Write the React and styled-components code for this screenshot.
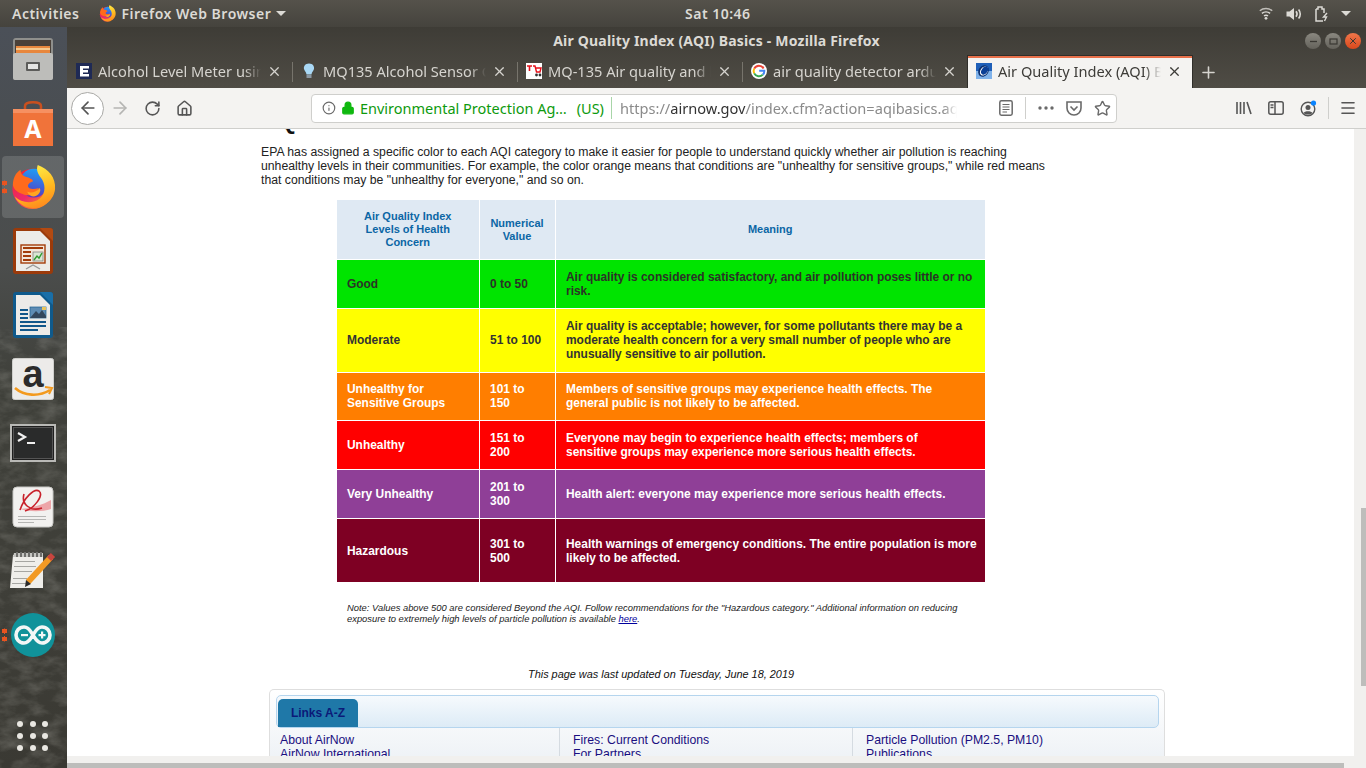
import React from 'react';
import styled, { createGlobalStyle } from 'styled-components';
import { ArrowLeft, ArrowRight, RotateCw, Home, Info, Lock, Star, Plus, X, Menu } from 'lucide-react';

const GlobalStyle = createGlobalStyle`
    html, body {
        margin: 0;
        padding: 0;
        width: 1366px;
        height: 768px;
        overflow: hidden;
        background: #fff;
    }
    * {
        box-sizing: border-box;
    }
`;

const UI_FONT = `"Noto Sans", "Open Sans", sans-serif`;
const WEB_FONT = `"Liberation Sans", Arial, sans-serif`;

const FirefoxLogo = ({ size, id }) => (
    <svg width={size} height={size} viewBox="0 0 48 48">
        <defs>
            <linearGradient id={`${id}a`} x1="0.1" y1="0.2" x2="0.7" y2="1">
                <stop offset="0" stopColor="#f0263f" />
                <stop offset="0.55" stopColor="#ec2a6c" />
                <stop offset="1" stopColor="#ff8a1e" />
            </linearGradient>
            <linearGradient id={`${id}b`} x1="0.5" y1="0" x2="0.3" y2="1">
                <stop offset="0" stopColor="#1f9cf5" />
                <stop offset="1" stopColor="#5a35c0" />
            </linearGradient>
            <linearGradient id={`${id}c`} x1="0.3" y1="0" x2="0.6" y2="1">
                <stop offset="0" stopColor="#fff04a" />
                <stop offset="0.6" stopColor="#ffb81f" />
                <stop offset="1" stopColor="#ff8a1e" />
            </linearGradient>
        </defs>
        <circle cx="23.5" cy="26" r="21" fill={`url(#${id}a)`} />
        <circle cx="25" cy="20" r="15" fill={`url(#${id}b)`} />
        <path d="M29 1 C40 5 48 14 47 26 C46 37 36 46 24 46 C15 46 8 41 5 34 C12 41 24 42 31 36 C38 30 37 20 32 14 C29 10 27 6 29 1Z" fill={`url(#${id}c)`} />
        <path d="M3 22 C3 15 6 9 11 6 C11 11 14 13 19 14 C21 15 24 16 24 18 C21 19 18 21 19 24 C21 27 26 26 30 25 C29 31 22 34 15 32 C8 30 4 27 3 22Z" fill="#ff6a1c" />
        <path d="M18 29 C22 31 28 29 31 25 C33 28 30 33 25 34 C22 34 19 32 18 29Z" fill="#ffa51f" />
    </svg>
);

const FilesIcon = () => (
    <svg width="44" height="44" viewBox="0 0 44 44">
        <rect x="2" y="1" width="40" height="42" rx="3" fill="#8f8f8c" />
        <rect x="4" y="3" width="36" height="14" fill="#4a4038" />
        <rect x="5" y="9" width="34" height="7" fill="#e8873d" />
        <rect x="5" y="11" width="34" height="2" fill="#f7c98d" />
        <rect x="2" y="16" width="40" height="27" rx="2" fill="#bdbdba" />
        <rect x="15" y="25" width="14" height="9" rx="1" fill="#5c5c5a" />
        <rect x="17" y="27" width="10" height="5" fill="#e6e6e4" />
    </svg>
);

const StoreIcon = () => (
    <svg width="44" height="46" viewBox="0 0 44 46">
        <path d="M14 10 V6 C14 1 30 1 30 6 V10" fill="none" stroke="#c9501f" strokeWidth="2.5" />
        <path d="M2 9 H42 V46 H2Z" fill="#f0733a" />
        <path d="M2 9 H42 V13 H2Z" fill="#f69061" />
        <text x="22" y="38" textAnchor="middle" fontFamily={UI_FONT} fontWeight="700" fontSize="25" fill="#fff">A</text>
    </svg>
);

const DocIcon = ({ dark, corner, children }) => (
    <svg width="42" height="48" viewBox="0 0 42 48">
        <rect x="1" y="1" width="40" height="46" rx="3" fill={dark} />
        <path d="M28 1 H38 C40 1 41 2 41 4 V14Z" fill={corner} />
        <path d="M4 4 H28 L38 14 V44 H4Z" fill="#ecebe8" />
        {children}
    </svg>
);

const ImpressIcon = () => (
    <DocIcon dark="#9b3a0a" corner="#b34a12">
        <rect x="9" y="18" width="24" height="18" fill="#f3e7da" stroke="#a33c0a" strokeWidth="1.4" />
        <rect x="11" y="20" width="20" height="2" fill="#a33c0a" />
        <rect x="11" y="24" width="8" height="2" fill="#a33c0a" />
        <rect x="11" y="28" width="8" height="2" fill="#a33c0a" />
        <rect x="11" y="32" width="8" height="2" fill="#a33c0a" />
        <rect x="21" y="25" width="10" height="9" fill="#d9e6d4" stroke="#777" strokeWidth="0.7" />
        <path d="M22 33 L25 29 L27 31 L30 26" stroke="#2f9b2f" strokeWidth="1.4" fill="none" />
        <path d="M14 42 L21 38 L28 42" stroke="#999" strokeWidth="1.4" fill="none" />
    </DocIcon>
);

const WriterIcon = () => (
    <DocIcon dark="#0f5a8c" corner="#1a6fa8">
        <rect x="8" y="18" width="8" height="2" fill="#11578a" />
        <rect x="8" y="22" width="8" height="2" fill="#11578a" />
        <rect x="8" y="26" width="8" height="2" fill="#11578a" />
        <rect x="8" y="30" width="26" height="2" fill="#11578a" />
        <rect x="8" y="34" width="26" height="2" fill="#11578a" />
        <rect x="8" y="38" width="18" height="2" fill="#11578a" />
        <rect x="18" y="16" width="16" height="11" fill="#5e8cb3" stroke="#1a5f90" strokeWidth="0.7" />
        <path d="M18 27 L24 20 L27 23 L30 19 L34 25 V27Z" fill="#33475c" />
        <rect x="30" y="16" width="4" height="3" fill="#e8c45a" />
    </DocIcon>
);

const AmazonIcon = () => (
    <svg width="42" height="42" viewBox="0 0 42 42">
        <rect x="0.5" y="0.5" width="41" height="41" rx="2" fill="#ecebe9" stroke="#cfcfcc" />
        <text x="21" y="29" textAnchor="middle" fontFamily={WEB_FONT} fontWeight="700" fontSize="38" fill="#2b2b2b">a</text>
        <path d="M3 30 C12 38 27 39 38 32" fill="none" stroke="#f39a1e" strokeWidth="2.6" />
        <path d="M33 29 L40 30 L37 36" fill="none" stroke="#f39a1e" strokeWidth="2" />
    </svg>
);

const TerminalIcon = () => (
    <svg width="46" height="38" viewBox="0 0 46 38">
        <rect x="1" y="1" width="44" height="36" fill="#1f1f1f" stroke="#b9b9b6" strokeWidth="2" />
        <rect x="3.5" y="3.5" width="39" height="31" fill="#2a2b2b" stroke="#555" />
        <path d="M8 9 L15 13 L8 17" fill="none" stroke="#f0f0f0" strokeWidth="2.2" />
        <rect x="17" y="18" width="8" height="2" fill="#f0f0f0" />
    </svg>
);

const ReaderIcon = () => (
    <svg width="42" height="42" viewBox="0 0 42 42">
        <rect x="1" y="1" width="40" height="40" rx="4" fill="#f2f1ef" stroke="#c8c8c5" />
        <path d="M8 23 C20 22 30 19 39 14 V23 C30 26 18 26 8 23Z" fill="#eda5a8" />
        <path d="M8 24 C12 12 22 2 27 5 C32 9 23 22 13 25 M12 8 C9 18 18 26 30 22" fill="none" stroke="#c8212b" strokeWidth="1.6" />
        <rect x="6" y="30" width="28" height="1" fill="#b5b5b3" />
        <rect x="6" y="33" width="28" height="1" fill="#b5b5b3" />
        <rect x="6" y="36" width="16" height="1" fill="#b5b5b3" />
    </svg>
);

const NotepadIcon = () => (
    <svg width="46" height="38" viewBox="0 0 46 38">
        <path d="M3 3 H33 V36 H0Z" fill="#efeeea" />
        <path d="M4 1 H33 V5 H3Z" fill="#c6c6c2" />
        {[6, 10, 14, 18, 22, 26, 30].map((x) => <rect key={x} x={x} y="0" width="2" height="5" fill="#6f6f6c" />)}
        <rect x="5" y="9" width="20" height="1" fill="#a6a6a2" />
        <rect x="4" y="14" width="22" height="1" fill="#a6a6a2" />
        <rect x="4" y="19" width="18" height="1" fill="#a6a6a2" />
        <rect x="3" y="26" width="14" height="1" fill="#a6a6a2" />
        <rect x="2" y="31" width="16" height="1" fill="#a6a6a2" />
        <path d="M18 30 L41 5" stroke="#f29a24" strokeWidth="6" />
        <path d="M39 7 L43 3" stroke="#c8453f" strokeWidth="6" />
        <path d="M15 35 L16 28 L21 32Z" fill="#2a2a2a" />
    </svg>
);

const ArduinoIcon = () => (
    <svg width="44" height="44" viewBox="0 0 44 44">
        <circle cx="22" cy="22" r="22" fill="#10929a" />
        <path d="M13 14 C18 14 20 19 22 22 C24 25 26 30 31 30 C36 30 39 26 39 22 C39 18 36 14 31 14 C26 14 24 19 22 22 C20 25 18 30 13 30 C8 30 5 26 5 22 C5 18 8 14 13 14Z" fill="none" stroke="#f2f7f6" strokeWidth="3.6" />
        <rect x="10" y="21" width="7" height="2.2" fill="#f2f7f6" />
        <rect x="27.5" y="21" width="7" height="2.2" fill="#f2f7f6" />
        <rect x="30" y="18.5" width="2.2" height="7" fill="#f2f7f6" />
    </svg>
);

const GridDots = () => (
    <svg width="32" height="32" viewBox="0 0 32 32" fill="#e9e7e2">
        {[3, 15, 27].map((y) =>
            [3, 16, 28].map((x) => <circle key={`${x}-${y}`} cx={x} cy={y} r="3" />)
        )}
    </svg>
);

const FaviconE = () => (
    <svg width="16" height="16" viewBox="0 0 16 16">
        <rect width="16" height="16" fill="#1f2a55" />
        <path d="M4 3 H13 V5.5 H7 V7 H12 V9.5 H7 V11 H13 V13.5 H4Z" fill="#fff" />
    </svg>
);

const FaviconBulb = () => (
    <svg width="16" height="16" viewBox="0 0 16 16">
        <path d="M8 0.5 C12 0.5 13.5 3.5 13 6 C12.6 8 10.8 9 10.5 11.5 H5.5 C5.2 9 3.4 8 3 6 C2.5 3.5 4 0.5 8 0.5Z" fill="#a9d8f5" />
        <rect x="5.5" y="12" width="5" height="3" fill="#8b98a3" />
    </svg>
);

const FaviconCart = () => (
    <svg width="16" height="16" viewBox="0 0 16 16">
        <rect width="16" height="16" fill="#fff" />
        <path d="M1 3 H6 M3.5 3 V8" stroke="#e5101a" strokeWidth="1.6" />
        <path d="M7 3 H9 L10.5 9 H14 L15 5 H10" stroke="#e5101a" strokeWidth="1.4" fill="none" />
        <circle cx="10.5" cy="12" r="1.4" fill="#333" />
        <circle cx="14" cy="12" r="1.4" fill="#333" />
    </svg>
);

const FaviconGoogle = () => (
    <svg width="16" height="16" viewBox="0 0 16 16">
        <circle cx="8" cy="8" r="8" fill="#fff" />
        <path d="M12.6 5.4 A5.3 5.3 0 0 0 3.2 5.6" fill="none" stroke="#ea4335" strokeWidth="2" />
        <path d="M3.2 5.6 A5.3 5.3 0 0 0 3.2 10.4" fill="none" stroke="#fbbc05" strokeWidth="2" />
        <path d="M3.2 10.4 A5.3 5.3 0 0 0 11.8 11.6" fill="none" stroke="#34a853" strokeWidth="2" />
        <path d="M11.8 11.6 C13 10.6 13.4 9.4 13.3 7.8 H8.2" fill="none" stroke="#4285f4" strokeWidth="2" />
    </svg>
);

const FaviconAqi = () => (
    <svg width="16" height="16" viewBox="0 0 16 16">
        <rect width="16" height="16" fill="#7fb2ea" />
        <rect width="16" height="8" fill="#1f5fb8" />
        <ellipse cx="7.5" cy="8" rx="5" ry="6" fill="#0b2f6f" transform="rotate(35 7.5 8)" />
        <ellipse cx="8" cy="8" rx="3.6" ry="5" fill="#fff" transform="rotate(35 8 8)" />
        <ellipse cx="8.6" cy="7.6" rx="3" ry="4.4" fill="#0b3f96" transform="rotate(35 8.6 7.6)" />
    </svg>
);

const ReaderGlyph = () => (
    <svg width="14" height="16" viewBox="0 0 14 16" fill="none" stroke="#6a6a6a" strokeWidth="1.5">
        <rect x="0.8" y="0.8" width="12.4" height="14.4" rx="1.6" />
        <path d="M3.5 4.5 H10.5 M3.5 7 H10.5 M3.5 9.5 H10.5 M3.5 12 H8" strokeWidth="1.1" />
    </svg>
);

const DotsGlyph = () => (
    <svg width="16" height="4" viewBox="0 0 16 4" fill="#6a6a6a">
        <circle cx="2" cy="2" r="1.7" />
        <circle cx="8" cy="2" r="1.7" />
        <circle cx="14" cy="2" r="1.7" />
    </svg>
);

const PocketGlyph = () => (
    <svg width="16" height="15" viewBox="0 0 16 15" fill="none" stroke="#6a6a6a" strokeWidth="1.6">
        <path d="M1 1 H15 V7 C15 11 12 14 8 14 C4 14 1 11 1 7Z" />
        <path d="M4.5 5.5 L8 9 L11.5 5.5" />
    </svg>
);

const LibraryGlyph = () => (
    <svg width="16" height="14" viewBox="0 0 16 14" fill="none" stroke="#555" strokeWidth="1.6">
        <path d="M1 1 V13 M4.5 1 V13 M8 1 V13 M11 1 L15 13" />
    </svg>
);

const SidebarGlyph = () => (
    <svg width="16" height="14" viewBox="0 0 16 14" fill="none" stroke="#555" strokeWidth="1.5">
        <rect x="0.8" y="0.8" width="14.4" height="12.4" rx="2" />
        <path d="M7 1 V13 M2.5 4 H5.5 M2.5 6.5 H5.5" />
    </svg>
);

const SyncGlyph = () => (
    <svg width="17" height="17" viewBox="0 0 17 17">
        <circle cx="8" cy="9" r="6.8" fill="none" stroke="#555" strokeWidth="1.4" />
        <circle cx="8" cy="7.4" r="2.5" fill="#555" />
        <path d="M3.6 13 C4.5 10.5 11.5 10.5 12.4 13 C10 15 6 15 3.6 13Z" fill="#555" />
        <circle cx="13.5" cy="3" r="2.6" fill="#0a84ff" />
    </svg>
);

const WifiGlyph = () => (
    <svg width="14" height="13" viewBox="0 0 14 13" fill="none" stroke="#dcdad5" strokeWidth="1.5">
        <path d="M0.8 3.8 C4.2 0.8 9.8 0.8 13.2 3.8" opacity="0.8" />
        <path d="M2.9 6.4 C5.2 4.5 8.8 4.5 11.1 6.4" />
        <path d="M5 8.9 C6.2 8 7.8 8 9 8.9" />
        <circle cx="7" cy="11.3" r="1.4" fill="#dcdad5" stroke="none" />
    </svg>
);

const VolumeGlyph = () => (
    <svg width="16" height="14" viewBox="0 0 16 14">
        <path d="M0.5 4.5 H3.5 L8 1 V13 L3.5 9.5 H0.5Z" fill="#dcdad5" />
        <path d="M10 4.3 C11.2 5.8 11.2 8.2 10 9.7 M12.6 2.4 C14.8 5 14.8 9 12.6 11.6" fill="none" stroke="#dcdad5" strokeWidth="1.6" />
    </svg>
);

const BatteryGlyph = () => (
    <svg width="13" height="16" viewBox="0 0 13 16" fill="none" stroke="#dcdad5" strokeWidth="1.5">
        <path d="M1 3 H3 V1 H7 V3 H9 V7" />
        <path d="M1 3 V15 H8" />
        <path d="M12 7 L8.5 11 H11.5 L9.5 15" strokeWidth="1.4" />
    </svg>
);

const WallpaperSvg = styled.svg`
    position: absolute;
    left: 0;
    top: 0;
`;

const Wallpaper = () => (
    <WallpaperSvg width="67" height="741">
        <filter id="rock" x="0" y="0" width="100%" height="100%">
            <feTurbulence type="fractalNoise" baseFrequency="0.05 0.09" numOctaves="4" seed="7" />
            <feColorMatrix values="0 0 0 0 0.62  0 0 0 0 0.61  0 0 0 0 0.56  1.1 0 0 0 -0.42" />
        </filter>
        <rect y="300" width="67" height="441" filter="url(#rock)" opacity="0.4" />
    </WallpaperSvg>
);

const Caret = styled.span`
    width: 0;
    height: 0;
    border-left: 5px solid transparent;
    border-right: 5px solid transparent;
    border-top: 5px solid #dcdad5;
`;

const Screen = styled.div`
    width: 1366px;
    height: 768px;
    display: flex;
    flex-direction: column;
    overflow: hidden;
    font-family: ${UI_FONT};
`;

const TopBar = styled.div`
    height: 27px;
    flex: none;
    display: grid;
    grid-template-columns: 673px auto 1fr;
    align-items: center;
    padding: 0 15px 0 12px;
    background: linear-gradient(#55524b, #45433d);
    color: #dcdad5;
    font-size: 14px;
    font-weight: 600;
    letter-spacing: 0.5px;
`;

const TopLeft = styled.div`
    display: flex;
    align-items: center;
`;

const AppMenu = styled.div`
    display: flex;
    align-items: center;
    gap: 5px;
    margin-left: 20px;
`;

const TopRight = styled.div`
    display: flex;
    align-items: center;
    justify-content: flex-end;
    gap: 13px;
`;

const Body = styled.div`
    flex: 1;
    min-height: 0;
    display: flex;
`;

const Dock = styled.div`
    position: relative;
    width: 67px;
    flex: none;
    display: flex;
    flex-direction: column;
    align-items: center;
    padding-right: 1px;
    background: linear-gradient(#4b5058 0, #4a4e52 90px, #4b4d4c 240px, #3f403a 360px, #3f3f39 540px, #3a3933 741px);
`;

const DockItem = styled.div`
    position: relative;
    width: 62px;
    height: 64px;
    flex: none;
    display: flex;
    align-items: center;
    justify-content: center;
    ${(p) => p.$active && `
        background: rgba(255, 255, 255, 0.14);
        border-radius: 4px;
        height: 62px;
        margin-top: 1px;
        margin-bottom: 1px;
    `}
`;

const RunDots = styled.span`
    position: absolute;
    left: 0;
    top: 50%;
    transform: translateY(-50%);
    width: 5px;
    height: 13px;
    background:
        radial-gradient(circle at 2.5px 2.5px, #e95420 2.5px, transparent 2.6px),
        radial-gradient(circle at 2.5px 10.5px, #e95420 2.5px, transparent 2.6px);
`;

const DockGrid = styled.div`
    position: relative;
    margin-top: auto;
    height: 47px;
    display: flex;
    align-items: flex-start;
    justify-content: center;
`;

const Browser = styled.div`
    flex: 1;
    min-width: 0;
    display: flex;
    flex-direction: column;
`;

const Chrome = styled.div`
    flex: none;
    background: linear-gradient(#3e3c36, #4f4c45);
`;

const TitleBar = styled.div`
    position: relative;
    height: 29px;
    display: flex;
    align-items: center;
    justify-content: center;
    color: #dcdad5;
    font-size: 14px;
    font-weight: 700;
    letter-spacing: 0.2px;
    padding-bottom: 2px;
`;

const WindowButtons = styled.div`
    position: absolute;
    right: 5px;
    top: 6px;
    display: flex;
    gap: 4px;
`;

const WindowButton = styled.span`
    width: 16px;
    height: 16px;
    border-radius: 50%;
    display: flex;
    align-items: center;
    justify-content: center;
    background: ${(p) => (p.$close ? 'linear-gradient(#f0764a, #d9481c)' : 'linear-gradient(#8a8880, #64625b)')};
    color: #3a3833;
`;

const TabStrip = styled.div`
    height: 32px;
    display: flex;
    align-items: stretch;
`;

const Tab = styled.div`
    width: 225px;
    flex: none;
    display: flex;
    align-items: center;
    padding: 0 10px 2px 9px;
    gap: 6px;
    font-size: 14.6px;
    color: ${(p) => (p.$active ? '#3d3c38' : '#d6d4cf')};
    ${(p) => p.$active && `
        background: #f4f3f1;
        border-top: 2px solid #e8704a;
        margin-left: 1px;
        width: 224px;
        padding: 0 10px 4px 8px;
        box-shadow: 0 0 0 1px #2f2e2a;
    `}
`;

const TabDivider = styled.span`
    width: 1px;
    height: 20px;
    align-self: center;
    margin-right: -1px;
    background: #77746c;
    flex: none;
`;

const TabLabel = styled.span`
    flex: 1;
    min-width: 0;
    white-space: nowrap;
    overflow: hidden;
    -webkit-mask-image: linear-gradient(to right, #000 90%, transparent 100%);
    mask-image: linear-gradient(to right, #000 90%, transparent 100%);
`;

const NewTab = styled.div`
    width: 32px;
    display: flex;
    align-items: center;
    justify-content: center;
    color: #d6d4cf;
`;

const NavBar = styled.div`
    height: 41px;
    flex: none;
    display: flex;
    align-items: center;
    background: #f4f3f1;
    border-bottom: 1px solid #cfcfcc;
    padding-left: 4px;
    color: #555;
`;

const BackButton = styled.div`
    width: 33px;
    height: 33px;
    border-radius: 50%;
    background: #fff;
    border: 1px solid #a9a9a6;
    display: flex;
    align-items: center;
    justify-content: center;
`;

const NavIcon = styled.div`
    width: 32px;
    display: flex;
    justify-content: center;
`;

const UrlBar = styled.div`
    width: 806px;
    height: 29px;
    margin-left: 111px;
    display: flex;
    align-items: center;
    background: #fff;
    border: 1px solid #cfcfcc;
    border-radius: 4px;
    font-size: 14.5px;
    white-space: nowrap;
    padding-left: 10px;
`;

const SecureLock = styled(Lock)`
    margin-left: 5px;
    flex: none;
`;

const Identity = styled.span`
    color: #0d9a0d;
    margin-left: 5px;
    width: 209px;
    overflow: hidden;
`;

const Country = styled.span`
    color: #0d9a0d;
    margin-left: 9px;
`;

const UrlDivider = styled.span`
    width: 1px;
    height: 22px;
    background: ${(p) => p.$color || '#cfcfcc'};
    flex: none;
    margin: ${(p) => p.$margin || '0'};
`;

const UrlText = styled.span`
    width: 339px;
    overflow: hidden;
    color: #8b8b8b;
    font-size: 14.6px;
    -webkit-mask-image: linear-gradient(to right, #000 96%, transparent 100%);
    mask-image: linear-gradient(to right, #000 96%, transparent 100%);
`;

const Host = styled.span`
    color: #333;
`;

const UrlActions = styled.div`
    display: flex;
    align-items: center;
    margin-left: 35px;
`;

const UrlAction = styled.span`
    width: 28px;
    display: flex;
    justify-content: center;
`;

const ToolIcons = styled.div`
    display: flex;
    align-items: center;
    margin-left: 111px;
`;

const ToolIcon = styled.span`
    width: 32px;
    display: flex;
    justify-content: center;
`;

const Viewport = styled.div`
    flex: 1;
    min-height: 0;
    display: grid;
    grid-template-columns: 1fr 12px;
    grid-template-rows: 1fr 12px;
    background: #f1f0ee;
`;

const Page = styled.div`
    background: #fff;
    overflow: hidden;
    min-height: 0;
    font-family: ${WEB_FONT};
    color: #222;
    padding-left: 194px;
`;

const Heading = styled.h2`
    margin: -22px 0 0;
    height: 26px;
    font-size: 24px;
    line-height: 28px;
    color: #111;
`;

const Intro = styled.p`
    width: 787px;
    margin: 12px 0 0;
    font-size: 12.24px;
    line-height: 14px;
`;

const AqiTable = styled.table`
    width: 648px;
    margin: 13px 0 0 76px;
    border-collapse: collapse;
    table-layout: fixed;
    font-size: 11.95px;
    line-height: 14px;
    font-weight: 700;
`;

const Column = styled.col`
    width: ${(p) => p.$width};
`;

const HeadCell = styled.th`
    height: 59px;
    padding: ${(p) => (p.$nudge ? '2px' : '0')} 10px 0;
    background: #dfe9f3;
    color: #0b66a5;
    font-size: 11px;
    line-height: 13px;
    border-left: 1px solid #fff;
    text-align: center;
    &:first-child {
        border-left: 0;
    }
`;

const Row = styled.tr`
    height: ${(p) => p.$height}px;
    background: ${(p) => p.$bg};
    color: ${(p) => p.$fg};
    border-top: 1px solid #fff;
`;

const Cell = styled.td`
    padding: ${(p) => (p.$nudge ? '2px' : '0')} 4px 0 ${(p) => (p.$first ? '10px' : '10.5px')};
    border-left: 1px solid #fff;
    white-space: pre-line;
    &:first-child {
        border-left: 0;
    }
`;

const Note = styled.p`
    width: 640px;
    margin: 21px 0 0 86px;
    font-size: 9.38px;
    line-height: 11px;
    font-style: italic;
`;

const NoteLink = styled.a`
    color: #00009c;
    text-decoration: underline;
`;

const Updated = styled.p`
    width: 800px;
    margin: 43px 0 0;
    text-align: center;
    font-size: 10.9px;
    line-height: 13px;
    font-style: italic;
    color: #111;
`;

const LinksPanel = styled.div`
    width: 896px;
    margin: 8px 0 0 8px;
    padding: 5px 5px 0 6px;
    border: 1px solid #dedede;
    border-bottom: 0;
    border-radius: 5px 5px 0 0;
    background: linear-gradient(#fff, #eef2f6 70px);
`;

const LinksBar = styled.div`
    height: 33px;
    padding: 3px 0 0 1px;
    border: 1px solid #b5d5ee;
    border-radius: 5px;
    background: linear-gradient(#f6fafd, #ddebf6);
    display: flex;
`;

const LinksTab = styled.div`
    width: 80px;
    display: flex;
    align-items: center;
    justify-content: center;
    background: #1f78a8;
    border-radius: 5px 5px 0 0;
    color: #0b1a78;
    font-size: 12px;
    font-weight: 700;
`;

const LinkColumns = styled.div`
    display: grid;
    grid-template-columns: 283px 293px 1fr;
    height: 40px;
    overflow: hidden;
`;

const LinkColumn = styled.div`
    padding: 5px 0 0 ${(p) => (p.$first ? '4px' : '13px')};
    border-left: ${(p) => (p.$first ? '0' : '1px solid #d5dbe1')};
    font-size: 12.25px;
    line-height: 14px;
    color: #1a0f80;
`;

const VTrack = styled.div`
    background: #f1f0ee;
    padding: 379px 0 0 7px;
`;

const VThumb = styled.div`
    height: 178px;
    background: #bdbdbb;
`;

const HTrack = styled.div`
    background: #f1f0ee;
    padding-top: 7px;
    padding-right: 10px;
`;

const HThumb = styled.div`
    height: 5px;
    background: #bdbdbb;
`;

const Corner = styled.div`
    background: #f1f0ee;
`;

const tabs = [
    { icon: <FaviconE />, label: 'Alcohol Level Meter using MQ-3' },
    { icon: <FaviconBulb />, label: 'MQ135 Alcohol Sensor Circuit' },
    { icon: <FaviconCart />, label: 'MQ-135 Air quality and hazardous' },
    { icon: <FaviconGoogle />, label: 'air quality detector arduino' },
];

const rows = [
    { name: 'Good', value: '0 to 50', meaning: 'Air quality is considered satisfactory, and air pollution poses little or no\nrisk.', bg: '#00e400', fg: '#2b3326', height: 49 },
    { name: 'Moderate', value: '51 to 100', meaning: 'Air quality is acceptable; however, for some pollutants there may be a\nmoderate health concern for a very small number of people who are\nunusually sensitive to air pollution.', bg: '#ffff00', fg: '#333', height: 64 },
    { name: 'Unhealthy for\nSensitive Groups', value: '101 to\n150', meaning: 'Members of sensitive groups may experience health effects. The\ngeneral public is not likely to be affected.', bg: '#ff7e00', fg: '#fff', height: 48 },
    { name: 'Unhealthy', value: '151 to\n200', meaning: 'Everyone may begin to experience health effects; members of\nsensitive groups may experience more serious health effects.', bg: '#ff0000', fg: '#fff', height: 49 },
    { name: 'Very Unhealthy', value: '201 to\n300', meaning: 'Health alert: everyone may experience more serious health effects.', bg: '#8f3f97', fg: '#fff', height: 49 },
    { name: 'Hazardous', value: '301 to\n500', meaning: 'Health warnings of emergency conditions. The entire population is more\nlikely to be affected.', bg: '#7e0023', fg: '#fff', height: 64, nudge: true },
];

const linkColumns = [
    ['About AirNow', 'AirNow International'],
    ['Fires: Current Conditions', 'For Partners'],
    ['Particle Pollution (PM2.5, PM10)', 'Publications'],
];

function App() {
    return (
        <Screen>
            <GlobalStyle />
            <TopBar>
                <TopLeft>
                    <span>Activities</span>
                    <AppMenu>
                        <FirefoxLogo size={17} id="top" />
                        <span>Firefox Web Browser</span>
                        <Caret />
                    </AppMenu>
                </TopLeft>
                <span>Sat 10:46</span>
                <TopRight>
                    <WifiGlyph />
                    <VolumeGlyph />
                    <BatteryGlyph />
                    <Caret />
                </TopRight>
            </TopBar>
            <Body>
                <Dock>
                    <Wallpaper />
                    <DockItem><FilesIcon /></DockItem>
                    <DockItem><StoreIcon /></DockItem>
                    <DockItem $active><RunDots /><FirefoxLogo size={46} id="dock" /></DockItem>
                    <DockItem><ImpressIcon /></DockItem>
                    <DockItem><WriterIcon /></DockItem>
                    <DockItem><AmazonIcon /></DockItem>
                    <DockItem><TerminalIcon /></DockItem>
                    <DockItem><ReaderIcon /></DockItem>
                    <DockItem><NotepadIcon /></DockItem>
                    <DockItem><RunDots /><ArduinoIcon /></DockItem>
                    <DockGrid><GridDots /></DockGrid>
                </Dock>
                <Browser>
                    <Chrome>
                        <TitleBar>
                            Air Quality Index (AQI) Basics - Mozilla Firefox
                            <WindowButtons>
                                <WindowButton><svg width="9" height="9" viewBox="0 0 9 9"><path d="M1 4.5 H8" stroke="#3a3833" strokeWidth="1.3" /></svg></WindowButton>
                                <WindowButton><svg width="9" height="9" viewBox="0 0 9 9"><rect x="1" y="2" width="7" height="5" fill="none" stroke="#3a3833" strokeWidth="1.2" /></svg></WindowButton>
                                <WindowButton $close><X size={10} strokeWidth={2.4} /></WindowButton>
                            </WindowButtons>
                        </TitleBar>
                        <TabStrip>
                            {tabs.map((tab) => (
                                <React.Fragment key={tab.label}>
                                    <Tab>
                                        {tab.icon}
                                        <TabLabel>{tab.label}</TabLabel>
                                        <X size={15} />
                                    </Tab>
                                    <TabDivider />
                                </React.Fragment>
                            ))}
                            <Tab $active>
                                <FaviconAqi />
                                <TabLabel>Air Quality Index (AQI) Basics</TabLabel>
                                <X size={15} />
                            </Tab>
                            <NewTab><Plus size={19} /></NewTab>
                        </TabStrip>
                    </Chrome>
                    <NavBar>
                        <BackButton><ArrowLeft size={20} /></BackButton>
                        <NavIcon><ArrowRight size={20} color="#b5b5b3" /></NavIcon>
                        <NavIcon><RotateCw size={17} strokeWidth={2.2} /></NavIcon>
                        <NavIcon><Home size={17} strokeWidth={2.2} /></NavIcon>
                        <UrlBar>
                            <Info size={14} color="#6a6a6a" />
                            <SecureLock size={14} color="#0fb80f" fill="#0fb80f" />
                            <Identity>Environmental Protection Ag…</Identity>
                            <Country>(US)</Country>
                            <UrlDivider $color="#a8d5a8" $margin="0 8px 0 7px" />
                            <UrlText>https://<Host>airnow.gov</Host>/index.cfm?action=aqibasics.aqi</UrlText>
                            <UrlActions>
                                <UrlAction><ReaderGlyph /></UrlAction>
                                <UrlDivider $margin="0 6px 0 5px" />
                                <UrlAction><DotsGlyph /></UrlAction>
                                <UrlAction><PocketGlyph /></UrlAction>
                                <UrlAction><Star size={17} strokeWidth={2} color="#6a6a6a" /></UrlAction>
                            </UrlActions>
                        </UrlBar>
                        <ToolIcons>
                            <ToolIcon><LibraryGlyph /></ToolIcon>
                            <ToolIcon><SidebarGlyph /></ToolIcon>
                            <ToolIcon><SyncGlyph /></ToolIcon>
                            <UrlDivider $margin="0 3px 0 4px" />
                            <ToolIcon><Menu size={18} strokeWidth={2.2} /></ToolIcon>
                        </ToolIcons>
                    </NavBar>
                    <Viewport>
                        <Page>
                            <Heading>AQI Colors</Heading>
                            <Intro>
                                EPA has assigned a specific color to each AQI category to make it easier for people to understand quickly whether air pollution is reaching unhealthy levels in their communities. For example, the color orange means that conditions are "unhealthy for sensitive groups," while red means that conditions may be "unhealthy for everyone," and so on.
                            </Intro>
                            <AqiTable>
                                <colgroup>
                                    <Column $width="142px" />
                                    <Column $width="76px" />
                                    <Column $width="auto" />
                                </colgroup>
                                <thead>
                                    <tr>
                                        <HeadCell>Air Quality Index Levels of Health Concern</HeadCell>
                                        <HeadCell $nudge>Numerical Value</HeadCell>
                                        <HeadCell>Meaning</HeadCell>
                                    </tr>
                                </thead>
                                <tbody>
                                    {rows.map((row) => (
                                        <Row key={row.name} $bg={row.bg} $fg={row.fg} $height={row.height}>
                                            <Cell $first $nudge={row.nudge}>{row.name}</Cell>
                                            <Cell $nudge={row.nudge}>{row.value}</Cell>
                                            <Cell $nudge={row.nudge}>{row.meaning}</Cell>
                                        </Row>
                                    ))}
                                </tbody>
                            </AqiTable>
                            <Note>
                                Note: Values above 500 are considered Beyond the AQI. Follow recommendations for the "Hazardous category." Additional information on reducing exposure to extremely high levels of particle pollution is available <NoteLink>here</NoteLink>.
                            </Note>
                            <Updated>This page was last updated on Tuesday, June 18, 2019</Updated>
                            <LinksPanel>
                                <LinksBar><LinksTab>Links A-Z</LinksTab></LinksBar>
                                <LinkColumns>
                                    {linkColumns.map((column, i) => (
                                        <LinkColumn key={column[0]} $first={i === 0}>
                                            {column.map((link) => <div key={link}>{link}</div>)}
                                        </LinkColumn>
                                    ))}
                                </LinkColumns>
                            </LinksPanel>
                        </Page>
                        <VTrack><VThumb /></VTrack>
                        <HTrack><HThumb /></HTrack>
                        <Corner />
                    </Viewport>
                </Browser>
            </Body>
        </Screen>
    );
}

export default App;
